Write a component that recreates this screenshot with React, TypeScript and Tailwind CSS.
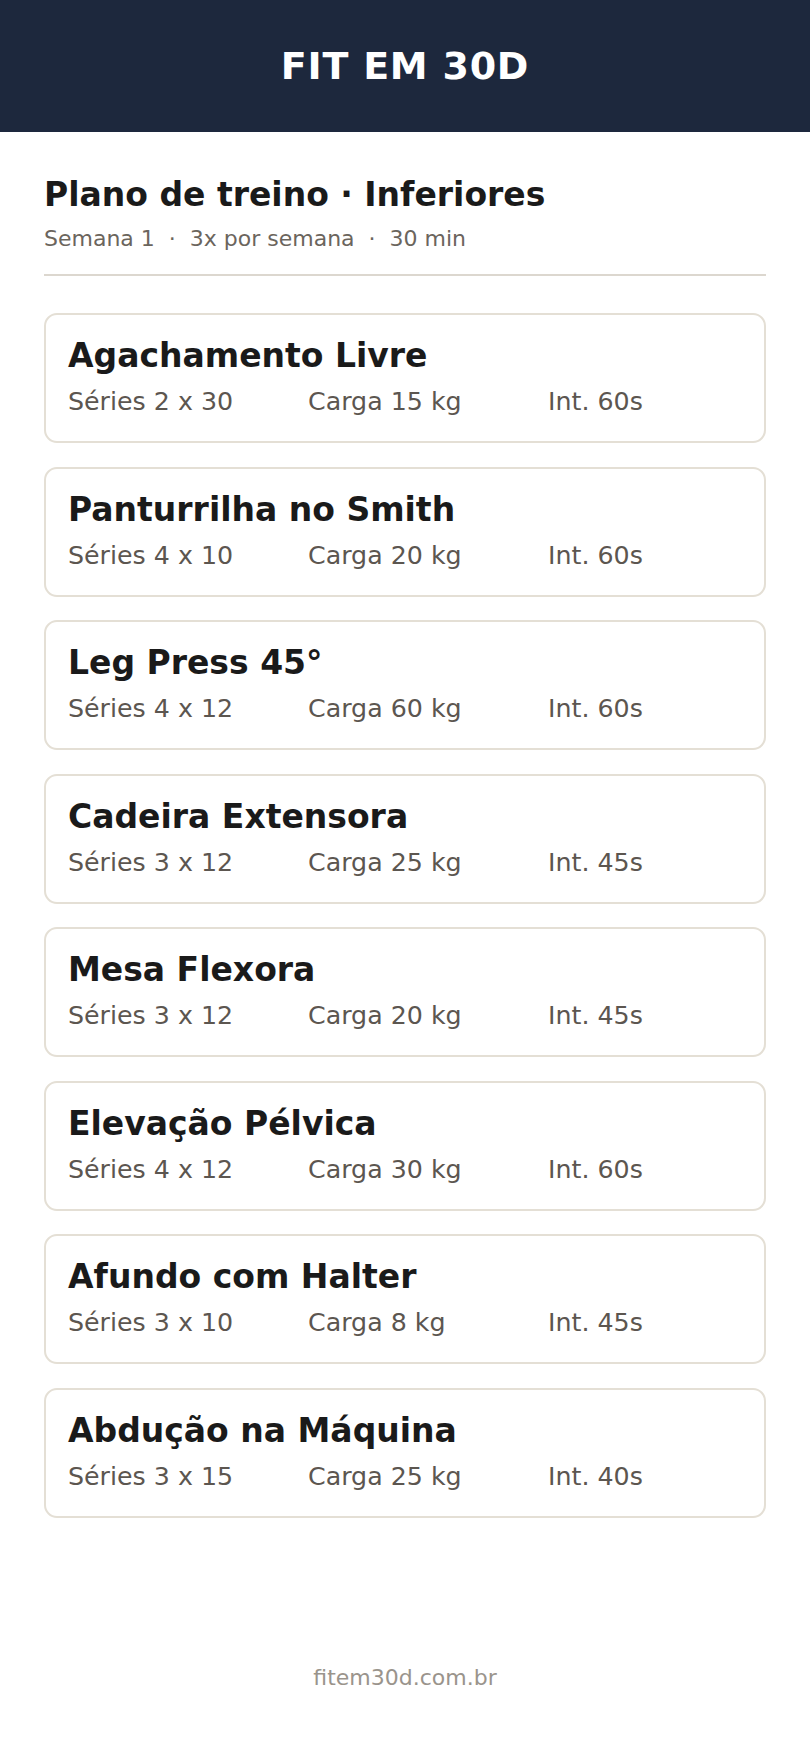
import React from "react";

const items = [
  { name: "Agachamento Livre", series: "2 x 30", carga: "15 kg", int: "60s" },
  { name: "Panturrilha no Smith", series: "4 x 10", carga: "20 kg", int: "60s" },
  { name: "Leg Press 45°", series: "4 x 12", carga: "60 kg", int: "60s" },
  { name: "Cadeira Extensora", series: "3 x 12", carga: "25 kg", int: "45s" },
  { name: "Mesa Flexora", series: "3 x 12", carga: "20 kg", int: "45s" },
  { name: "Elevação Pélvica", series: "4 x 12", carga: "30 kg", int: "60s" },
  { name: "Afundo com Halter", series: "3 x 10", carga: "8 kg", int: "45s" },
  { name: "Abdução na Máquina", series: "3 x 15", carga: "25 kg", int: "40s" },
];

export default function App() {
  return (
    <div className="min-h-[1754px] w-[810px] bg-white flex flex-col font-['DejaVu_Sans',sans-serif]">
      <header className="h-[132px] bg-[#1d283d] flex items-center justify-center">
        <h1 className="text-white font-bold text-[38px] tracking-[0.02em] leading-none">FIT EM 30D</h1>
      </header>
      <main className="px-[44px] pt-[43px] flex flex-col">
        <h2 className="text-[#1a1a1a] font-bold text-[33px] leading-[40px]">Plano de treino · Inferiores</h2>
        <p className="text-[#6b655d] text-[22px] leading-[28px] mt-[10px]">
          Semana 1&nbsp;&nbsp;·&nbsp;&nbsp;3x por semana&nbsp;&nbsp;·&nbsp;&nbsp;30 min
        </p>
        <div className="h-[2px] bg-[#dcd7cf] mt-[21px]" />
        <div className="flex flex-col gap-[23.5px] mt-[37px]">
          {items.map((it) => (
            <div key={it.name} className="h-[130px] border-2 border-[#e4dfd5] rounded-[13px] px-[22px] pt-[21px]">
              <div className="text-[#1a1a1a] font-bold text-[33px] leading-[40px]">{it.name}</div>
              <div className="flex text-[#5c5650] text-[25.3px] leading-[30px] mt-[11px]">
                <span className="w-[240px]">Séries {it.series}</span>
                <span className="w-[240px]">Carga {it.carga}</span>
                <span>Int. {it.int}</span>
              </div>
            </div>
          ))}
        </div>
      </main>
      <footer className="mt-[146px] text-center text-[#9a948c] text-[22px] leading-[28px]">fitem30d.com.br</footer>
    </div>
  );
}
